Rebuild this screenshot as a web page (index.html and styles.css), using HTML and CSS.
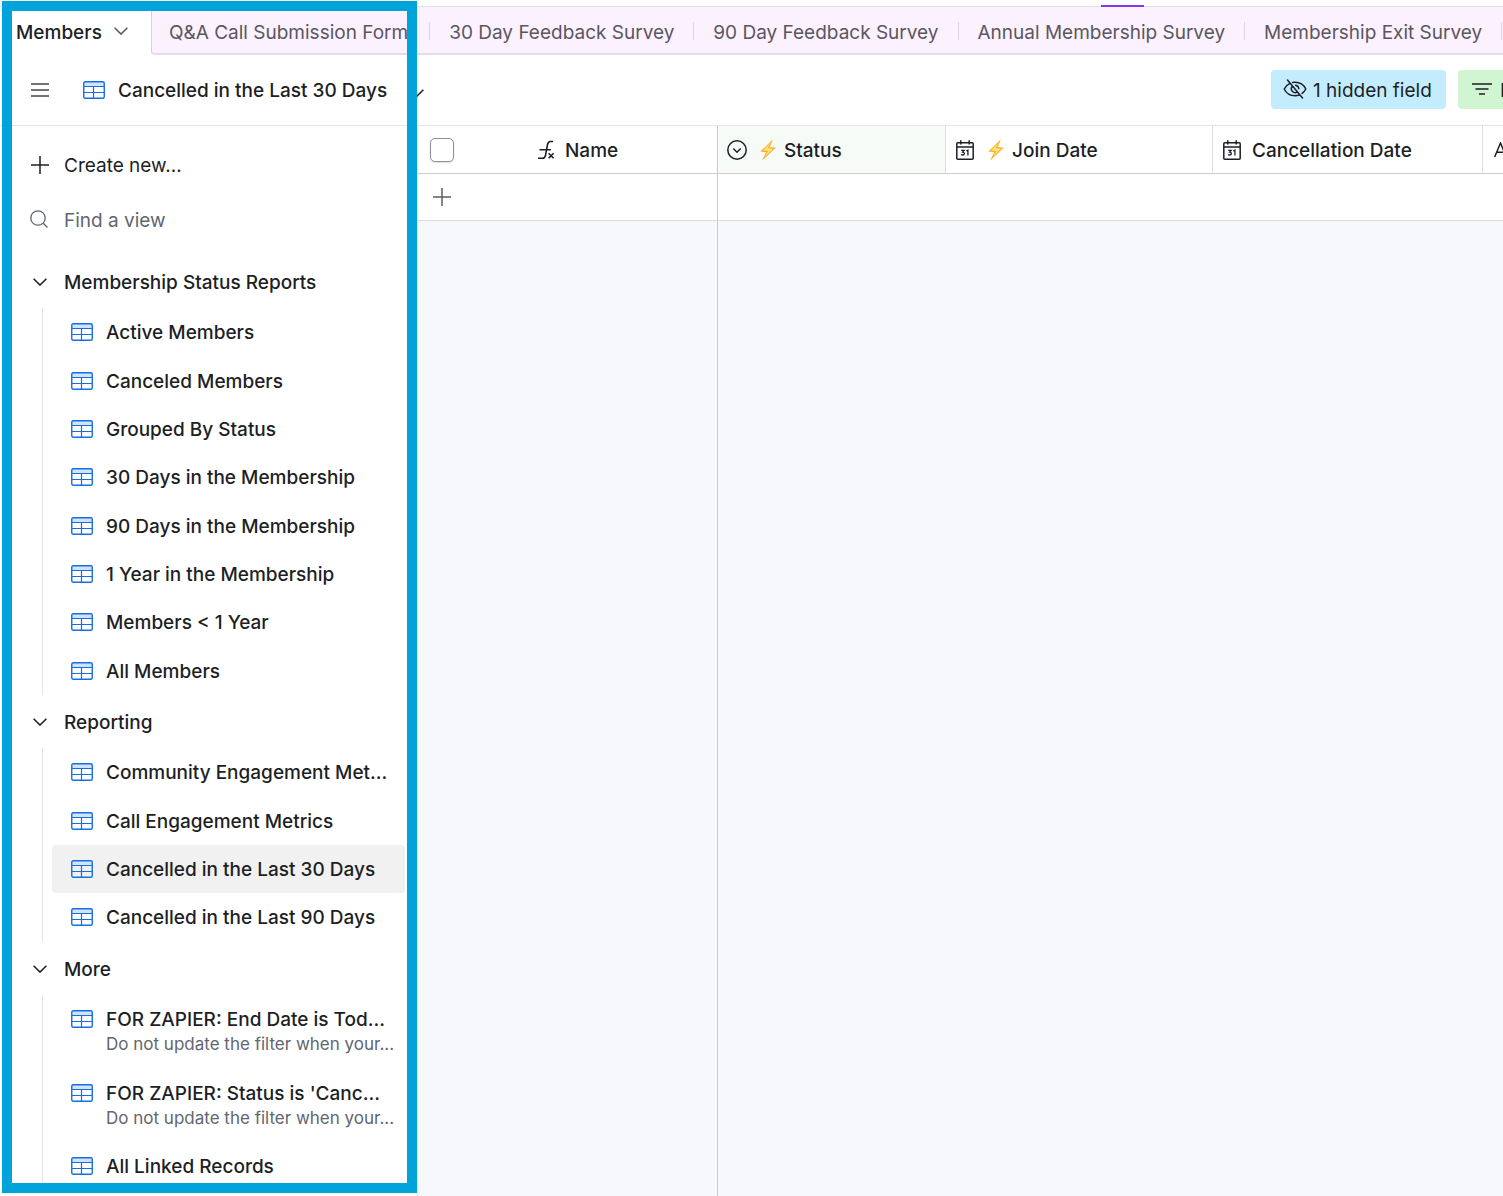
FILE: index.html
```html
<!DOCTYPE html>
<html lang="en">
<head>
<meta charset="utf-8">
<title>Members – Cancelled in the Last 30 Days</title>
<link rel="stylesheet" href="styles.css">
</head>
<body>
<svg class="sprite" aria-hidden="true">
  <symbol id="grid" viewBox="0 0 22 18">
    <rect x="1" y="1" width="20" height="4" fill="#d0e4fd"/>
    <rect x=".75" y=".75" width="20.5" height="16.5" rx="1.5" fill="none" stroke="currentColor" stroke-width="1.4"/>
    <path d="M1 5.5h20M1 11.5h20M10.5 5.5v12" fill="none" stroke="currentColor" stroke-width="1.2"/>
  </symbol>
  <symbol id="chevron" viewBox="0 0 14 8">
    <path d="M.6.7 7 7.1 13.4.7" fill="none" stroke="currentColor" stroke-width="1.5"/>
  </symbol>
  <symbol id="plus" viewBox="0 0 18 18">
    <path d="M9 0v18M0 9h18" fill="none" stroke="currentColor" stroke-width="1.5"/>
  </symbol>
  <symbol id="bolt" viewBox="0 0 16 22">
    <path d="M13 .3.3 12.600l5.800.6L2 21.800 15.800 8.700l-6-.8z" fill="#fdb02a"/>
    <path d="M10.500 3.500 3 11.400l5.300.6-3.400 5.800 8.200-8-5.400-.7z" fill="#fee27a"/>
  </symbol>
  <symbol id="calendar" viewBox="0 0 18 20">
    <path d="M1.800 2.800h14.400q1 0 1 1v14.400q0 1-1 1H1.800q-1 0-1-1V3.800q0-1 1-1zM.8 7h16.400M4.800.3v4.200M13.200.3v4.200" fill="none" stroke="currentColor" stroke-width="1.500"/>
    <path d="M5.200 10.300h3l-1.600 1.900q1.900.1 1.800 1.500-.2 1.300-1.700 1.300-1 0-1.600-.7M10.300 11l1.600-.9v5.300" fill="none" stroke="currentColor" stroke-width="1.300"/>
  </symbol>
</svg>

<div class="app">
  <div class="top-strip"><span class="top-mark"></span></div>

  <nav class="tabs" aria-label="Tables">
    <button class="tab-active" type="button"><span>Members</span> <svg class="chevron"><use href="#chevron"/></svg></button>
    <div class="tab-list">
      <a class="tab" href="#"><span>Q&amp;A Call Submission Form</span></a>
      <a class="tab" href="#"><span>30 Day Feedback Survey</span></a>
      <a class="tab" href="#"><span>90 Day Feedback Survey</span></a>
      <a class="tab" href="#"><span>Annual Membership Survey</span></a>
      <a class="tab" href="#"><span>Membership Exit Survey</span></a>
      <div class="tab"></div>
    </div>
  </nav>

  <header class="view-bar">
    <button class="menu-button" type="button" aria-label="Toggle sidebar">
      <svg width="18" height="14" viewBox="0 0 18 14"><path d="M0 1h18M0 7h18M0 13h18" stroke="currentColor" stroke-width="1.500"/></svg>
    </button>
    <button class="view-name" type="button">
      <svg class="grid-icon"><use href="#grid"/></svg>
      <span>Cancelled in the Last 30 Days</span>
      <svg class="chevron"><use href="#chevron"/></svg>
    </button>
    <div class="actions">
      <button class="pill hidden-fields" type="button">
        <svg width="24" height="20" viewBox="0 0 24 20" fill="none" stroke="currentColor" stroke-width="1.500" stroke-linecap="round">
          <path d="M4.500 1 19.500 19M7.300 4.200C4 5.900 2 8.400 1.200 10c1.600 3.300 5.300 6.800 10.800 6.800 1.800 0 3.400-.4 4.800-1M9.600 3.400c.8-.2 1.600-.2 2.400-.2 5.500 0 9.200 3.500 10.800 6.800-.7 1.400-2 3.100-3.700 4.400M9.500 7.100a3.800 3.800 0 0 0 5 5.700M12.700 6.300a3.800 3.800 0 0 1 3.100 3.400"/>
        </svg>
        <span>1 hidden field</span>
      </button>
      <button class="pill filter" type="button">
        <svg width="20" height="12" viewBox="0 0 20 12"><path d="M0 1h20M3.500 6h13M7 11h6" stroke="currentColor" stroke-width="1.500"/></svg>
        <span>Filtered by Status</span>
      </button>
    </div>
  </header>

  <div class="workspace">
    <aside class="sidebar">
      <button class="create" type="button"><svg width="18" height="18"><use href="#plus"/></svg><span>Create new...</span></button>
      <label class="find">
        <svg width="18" height="18" viewBox="0 0 18 18" fill="none" stroke="currentColor" stroke-width="1.300"><circle cx="8" cy="8" r="7.200"/><path d="m13.200 13.200 4.300 4.300"/></svg>
        <input type="text" placeholder="Find a view" aria-label="Find a view">
      </label>

      <section>
        <button class="section-title" type="button"><svg class="chevron"><use href="#chevron"/></svg><span>Membership Status Reports</span></button>
        <ul class="views">
          <li><a class="view" href="#"><svg class="grid-icon"><use href="#grid"/></svg><span class="label">Active Members</span></a></li>
          <li><a class="view" href="#"><svg class="grid-icon"><use href="#grid"/></svg><span class="label">Canceled Members</span></a></li>
          <li><a class="view" href="#"><svg class="grid-icon"><use href="#grid"/></svg><span class="label">Grouped By Status</span></a></li>
          <li><a class="view" href="#"><svg class="grid-icon"><use href="#grid"/></svg><span class="label">30 Days in the Membership</span></a></li>
          <li><a class="view" href="#"><svg class="grid-icon"><use href="#grid"/></svg><span class="label">90 Days in the Membership</span></a></li>
          <li><a class="view" href="#"><svg class="grid-icon"><use href="#grid"/></svg><span class="label">1 Year in the Membership</span></a></li>
          <li><a class="view" href="#"><svg class="grid-icon"><use href="#grid"/></svg><span class="label">Members &lt; 1 Year</span></a></li>
          <li><a class="view" href="#"><svg class="grid-icon"><use href="#grid"/></svg><span class="label">All Members</span></a></li>
        </ul>
      </section>

      <section>
        <button class="section-title" type="button"><svg class="chevron"><use href="#chevron"/></svg><span>Reporting</span></button>
        <ul class="views">
          <li><a class="view" href="#"><svg class="grid-icon"><use href="#grid"/></svg><span class="label">Community Engagement Met...</span></a></li>
          <li><a class="view" href="#"><svg class="grid-icon"><use href="#grid"/></svg><span class="label">Call Engagement Metrics</span></a></li>
          <li><a class="view selected" href="#" aria-current="page"><svg class="grid-icon"><use href="#grid"/></svg><span class="label">Cancelled in the Last 30 Days</span></a></li>
          <li><a class="view" href="#"><svg class="grid-icon"><use href="#grid"/></svg><span class="label">Cancelled in the Last 90 Days</span></a></li>
        </ul>
      </section>

      <section>
        <button class="section-title" type="button"><svg class="chevron"><use href="#chevron"/></svg><span>More</span></button>
        <ul class="views">
          <li><a class="view" href="#"><svg class="grid-icon"><use href="#grid"/></svg><span class="label">FOR ZAPIER: End Date is Tod...</span><span class="note">Do not update the filter when your...</span></a></li>
          <li><a class="view" href="#"><svg class="grid-icon"><use href="#grid"/></svg><span class="label">FOR ZAPIER: Status is 'Canc...</span><span class="note">Do not update the filter when your...</span></a></li>
          <li><a class="view" href="#"><svg class="grid-icon"><use href="#grid"/></svg><span class="label">All Linked Records</span></a></li>
        </ul>
      </section>
    </aside>

    <main class="grid-pane">
      <table class="records">
        <colgroup><col class="col-name"><col class="col-status"><col class="col-join"><col class="col-cancel"><col></colgroup>
        <thead>
          <tr>
            <th scope="col">
              <div class="field name-field">
                <input type="checkbox" aria-label="Select all records">
                <svg width="20" height="20" viewBox="0 0 20 20" fill="none" stroke="currentColor" stroke-width="1.600">
                  <path d="M17 1.500h-2.300q-2.600 0-3.200 3L9.500 15.300q-.6 3-3.200 3H2M3.500 9.800h11.300M12.600 13.200l5 5.100M17.600 13.200l-5 5.100"/>
                </svg>
                <span>Name</span>
              </div>
            </th>
            <th class="filtered" scope="col">
              <div class="field">
                <svg width="20" height="20" viewBox="0 0 20 20" fill="none" stroke="currentColor" stroke-width="1.500"><circle cx="10" cy="10" r="9.200"/><path d="M6.300 8.500 10 12.200l3.700-3.700"/></svg>
                <svg class="bolt"><use href="#bolt"/></svg>
                <span>Status</span>
              </div>
            </th>
            <th scope="col">
              <div class="field">
                <svg class="calendar"><use href="#calendar"/></svg>
                <svg class="bolt"><use href="#bolt"/></svg>
                <span>Join Date</span>
              </div>
            </th>
            <th scope="col">
              <div class="field">
                <svg class="calendar"><use href="#calendar"/></svg>
                <span>Cancellation Date</span>
              </div>
            </th>
            <th scope="col">
              <div class="field text-field">
                <svg width="20" height="16" viewBox="0 0 20 16" fill="none" stroke="currentColor" stroke-width="1.500"><path d="M.7 15 6.500 1l5.800 14M2.700 10.300h7.600"/></svg>
              </div>
            </th>
          </tr>
        </thead>
        <tbody>
          <tr>
            <td><button class="add-record" type="button" aria-label="Add record"><svg width="18" height="18"><use href="#plus"/></svg></button></td>
            <td colspan="4"></td>
          </tr>
        </tbody>
      </table>
      <div class="empty-area"></div>
    </main>
  </div>

  <div class="highlight" aria-hidden="true"></div>
</div>
</body>
</html>
```
FILE: styles.css
```css
* { box-sizing: border-box; }

body {
  margin: 0;
  background: #fff;
  color: #1d1f25;
  font: 500 19px/24px Inter, "Liberation Sans", sans-serif;
}

button, input {
  margin: 0;
  padding: 0;
  border: 0;
  background: none;
  color: inherit;
  font: inherit;
  text-align: left;
}

a { color: inherit; text-decoration: none; }
svg { flex: none; display: block; }
.sprite { display: none; }

.app {
  position: relative;
  display: flex;
  flex-direction: column;
  min-height: 100vh;
  overflow: hidden;
}

.chevron { width: 14px; height: 8px; }
.grid-icon { width: 22px; height: 18px; color: #166ee1; }
.bolt { width: 16px; height: 22px; }
.calendar { width: 18px; height: 20px; }

/* Text sits slightly low beside its icon */
.view-name span, .section-title span, .field span, .label { padding-top: 2px; }
.tab span, .tab-active span, .pill span { padding-top: 4px; }

/* Top strip and table tabs */
.top-strip {
  position: relative;
  height: 7px;
  border-bottom: 1px solid #e3e0e5;
}

.top-mark {
  position: absolute;
  right: 359px;
  bottom: -1px;
  width: 43px;
  height: 2px;
  background: #7c37ef;
}

.tabs { display: flex; height: 48px; }

.tab-active {
  display: flex;
  flex: none;
  align-items: center;
  gap: 12px;
  width: 151px;
  padding: 0 0 0 16px;
}

.tab-active .chevron { color: #55575d; }

.tab-list {
  display: flex;
  flex: 1;
  min-width: 0;
  overflow: hidden;
  border-left: 1px solid #d8d0dc;
  border-bottom: 2px solid #e5dce8;
  border-bottom-left-radius: 4px;
  background: #fcf1fe;
  color: #5a565e;
  font-weight: 400;
}

.tab {
  flex: none;
  display: flex;
  align-items: center;
  height: 48px;
  padding: 0 19px;
  white-space: nowrap;
}

.tab:first-child { padding: 0 21px 0 17px; }

.tab + .tab::before {
  content: "";
  width: 1px;
  height: 18px;
  margin: 0 19px 0 -19px;
  background: #ddd6e2;
}

/* View bar */
.view-bar {
  display: flex;
  align-items: center;
  height: 71px;
  padding-left: 31px;
  border-bottom: 1px solid #e3e4e6;
}

.menu-button { color: #45474d; }

.view-name {
  display: flex;
  align-items: center;
  gap: 13px;
  margin-left: 34px;
}

.view-name .chevron { margin: 5px 0 0 10px; }

.actions {
  display: flex;
  flex: none;
  gap: 12px;
  width: 232px;
  margin: 0 0 2px auto;
  overflow: hidden;
  font-weight: 400;
}

.pill {
  display: flex;
  flex: none;
  align-items: center;
  height: 39px;
  padding: 0 12px;
  border-radius: 4px;
  white-space: nowrap;
}

.hidden-fields { gap: 6px; width: 175px; background: #c4ecff; }
.filter { gap: 8px; padding-left: 14px; background: #cff5d1; }

/* Sidebar */
.workspace { display: flex; flex: 1; }

.sidebar {
  flex: none;
  width: 418px;
  padding: 12px 12px 0 0;
  border-right: 1px solid #e3e4e6;
}

.create, .find, .section-title {
  display: flex;
  align-items: center;
  width: 100%;
}

.create, .find { height: 54px; padding-left: 31px; gap: 15px; font-weight: 400; }
.find { margin-bottom: 9px; padding-left: 30px; gap: 16px; color: #616670; }
.create span { padding-top: 2px; }
.find input { flex: 1; min-width: 0; padding-top: 4px; outline: 0; }
.find input::placeholder { color: #616670; opacity: 1; }

.section-title { height: 53px; padding-left: 33px; gap: 17px; }

.views {
  margin: 0 0 0 42px;
  padding: 0 0 0 9px;
  border-left: 1px solid #e3e4e6;
  list-style: none;
}

.views li:nth-child(3n + 1) { padding-bottom: 1px; }

.view {
  display: grid;
  grid-template-columns: 22px 1fr;
  column-gap: 13px;
  align-items: center;
  padding: 11px 8px 11px 19px;
  border-radius: 4px;
}

.view.selected { background: #f1f1f1; }

.label, .note {
  min-width: 0;
  overflow: hidden;
  text-overflow: ellipsis;
  white-space: nowrap;
}

.note {
  grid-column: 2;
  color: #616670;
  font-size: 17px;
  font-weight: 400;
  line-height: 25px;
}

/* Record grid */
.grid-pane {
  display: flex;
  flex: 1;
  flex-direction: column;
  min-width: 0;
  overflow: hidden;
  background: #f7f8fc;
}

.records {
  width: 100%;
  table-layout: fixed;
  border-collapse: separate;
  border-spacing: 0;
  background: #fff;
}

.col-name { width: 300px; }
.col-status { width: 228px; }
.col-join { width: 267px; }
.col-cancel { width: 270px; }

th, td { padding: 0; text-align: left; overflow: hidden; }
th { height: 48px; border-right: 1px solid #dddee1; border-bottom: 1px solid #cdcdcf; font-weight: 500; }
td { height: 47px; border-bottom: 1px solid #dddee1; }
th:first-child { border-right-color: #c9cacd; }
td:first-child { border-right: 1px solid #c9cacd; }
th:last-child { border-right: 0; }
.filtered { background: #f6fbf8; }

.field { display: flex; align-items: center; padding-left: 9px; white-space: nowrap; }
.field span { margin-left: 10px; }
.field .bolt { margin-left: 13px; }
.field .bolt + span { margin-left: 8px; }
.calendar { margin: 0 1px; }
.text-field { padding-left: 11px; }

.name-field { padding-left: 12px; }
.name-field svg { margin-left: 82px; }
.name-field span { margin-left: 9px; }

.name-field input {
  flex: none;
  width: 24px;
  height: 24px;
  appearance: none;
  border: 1px solid #8f9094;
  border-radius: 5px;
  background: #fff;
  box-shadow: 0 1px 2px #0002;
}

.add-record { display: block; padding-left: 15px; color: #5c5e62; }

.empty-area { flex: 1; width: 300px; border-right: 1px solid #c9cacd; }

/* Callout frame over the sidebar */
.highlight {
  position: absolute;
  top: 1px;
  bottom: 3px;
  left: 2px;
  width: 415px;
  border: 10px solid #00a4da;
  pointer-events: none;
}
```
